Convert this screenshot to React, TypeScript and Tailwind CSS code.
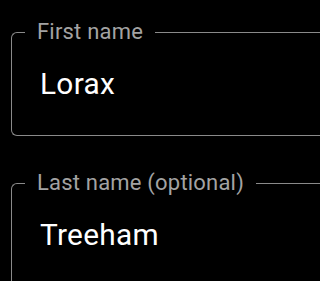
import React from 'react'

const fields = [
  { label: 'First name', value: 'Lorax' },
  { label: 'Last name (optional)', value: 'Treeham' },
]

// field runs past the right edge of the window, so no right border shows
function OutlinedField({ label, value }: { label: string; value: string }) {
  return (
    <fieldset className="ml-[11px] min-w-0 rounded-l-[6px] border border-r-0 border-[#8a8a8a] px-[13px] pb-[34px] pt-[23px]">
      <legend className="px-[12px] text-[22px] leading-[22px] tracking-[0.2px] text-[#a3a3a3]">{label}</legend>
      <div className="pl-[15px] text-[29.8px] leading-[35px] tracking-[0.3px] text-white">{value}</div>
    </fieldset>
  )
}

export default function App() {
  return (
    <div
      className="flex h-[281px] w-full flex-col gap-[36px] overflow-hidden bg-black pt-[21px]"
      style={{ fontFamily: 'Roboto, "Noto Sans", sans-serif' }}
    >
      {fields.map((f) => (
        <OutlinedField key={f.label} label={f.label} value={f.value} />
      ))}
    </div>
  )
}
